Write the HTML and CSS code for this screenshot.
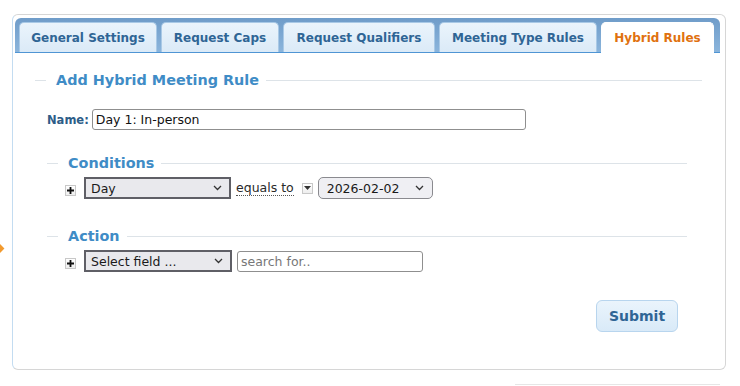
FILE: index.html
```html
<!DOCTYPE html>
<html>
<head>
<meta charset="utf-8">
<link rel="stylesheet" href="styles.css">
</head>
<body>
<div class="arrow"></div>
<div class="panel">
  <div class="tabbar">
    <div class="tab">General Settings</div>
    <div class="tab">Request Caps</div>
    <div class="tab">Request Qualifiers</div>
    <div class="tab">Meeting Type Rules</div>
    <div class="tab active">Hybrid Rules</div>
  </div>
  <div class="content">
    <div class="legend main"><span class="line short"></span><span class="ltext">Add Hybrid Meeting Rule</span><span class="line grow"></span></div>
    <div class="namerow">
      <span class="label">Name:</span>
      <input class="textin name" type="text" value="Day 1: In-person">
    </div>
    <div class="sub">
      <div class="legend"><span class="line short"></span><span class="ltext">Conditions</span><span class="line grow"></span></div>
      <div class="row">
        <span class="plus"><svg width="7" height="7" viewBox="0 0 7 7"><path d="M0 3.5H7M3.5 0V7" stroke="#111" stroke-width="1.8"/></svg></span>
        <span class="sel dark w146">Day<svg class="chev" width="9" height="6" viewBox="0 0 9 6"><path d="M1 1L4.5 4.5L8 1" fill="none" stroke="#333" stroke-width="1.3"/></svg></span>
        <span class="eq">equals to</span>
        <span class="dd"><svg width="7" height="4" viewBox="0 0 7 4"><path d="M0 0H7L3.5 4Z" fill="#333"/></svg></span>
        <span class="sel round w114">2026-02-02<svg class="chev" width="9" height="6" viewBox="0 0 9 6"><path d="M1 1L4.5 4.5L8 1" fill="none" stroke="#333" stroke-width="1.3"/></svg></span>
      </div>
    </div>
    <div class="sub action">
      <div class="legend"><span class="line short"></span><span class="ltext">Action</span><span class="line grow"></span></div>
      <div class="row">
        <span class="plus"><svg width="7" height="7" viewBox="0 0 7 7"><path d="M0 3.5H7M3.5 0V7" stroke="#111" stroke-width="1.8"/></svg></span>
        <span class="sel dark w147">Select field ...<svg class="chev" width="9" height="6" viewBox="0 0 9 6"><path d="M1 1L4.5 4.5L8 1" fill="none" stroke="#333" stroke-width="1.3"/></svg></span>
        <input class="textin search" type="text" placeholder="search for..">
      </div>
    </div>
    <div class="submitrow"><button class="submit">Submit</button></div>
  </div>
</div>
<div class="foot"></div>
</body>
</html>
```
FILE: styles.css
```css
* { box-sizing: border-box; }
html, body { margin: 0; padding: 0; background: #fff; }
body {
  font-family: "DejaVu Sans", Verdana, sans-serif;
  position: relative;
  width: 740px;
  height: 386px;
  overflow: hidden;
  padding: 14px 0 0 12px;
}
.arrow {
  position: absolute;
  left: -4px;
  top: 245px;
  width: 7px;
  height: 7px;
  background: #f29a2e;
  transform: rotate(45deg);
}
.panel {
  width: 714px;
  height: 356px;
  border: 1px solid #d6d6d6;
  border-left-color: #c3dcf1;
  border-radius: 6px;
  padding: 3px 5px 0 2px;
  display: flex;
  flex-direction: column;
}
.tabbar {
  height: 35px;
  background: linear-gradient(#6f9cc9, #8bb5dc);
  border-radius: 6px 6px 0 0;
  border-bottom: 1px solid #4f95d4;
  display: flex;
  align-items: flex-end;
  gap: 4px;
  padding: 0 5px 0 4px;
}
.tab {
  height: 30px;
  background: linear-gradient(#eaf4fc, #dbeaf7);
  border: 1px solid #a9c9e6;
  border-bottom: none;
  border-radius: 5px 5px 0 0;
  font-weight: bold;
  font-size: 12px;
  color: #2f6595;
  display: flex;
  align-items: center;
  justify-content: center;
  padding: 0;
}
.tab:nth-child(1) { width: 138px; }
.tab:nth-child(2) { width: 118px; }
.tab:nth-child(3) { width: 152px; }
.tab:nth-child(4) { width: 158px; }
.tab.active {
  width: 113px;
  background: #fff;
  border-color: #fff;
  color: #e0710f;
  height: 31px;
  margin-bottom: -1px;
  padding-bottom: 1px;
}
.content {
  flex: 1;
  padding: 17px 18px 0 20px;
  display: flex;
  flex-direction: column;
}
.legend {
  display: flex;
  align-items: center;
  height: 20px;
}
.line { height: 1px; background: #dde3e8; }
.line.short { width: 11px; margin-right: 10px; }
.line.grow { flex: 1; margin-left: 7px; }
.ltext {
  font-weight: bold;
  font-size: 14.4px;
  color: #3f8cc6;
  line-height: 20px;
}
.namerow {
  display: flex;
  align-items: center;
  margin-top: 19px;
  padding-left: 12px;
  gap: 3px;
}
.label {
  font-weight: bold;
  font-size: 11.5px;
  color: #2d5d88;
}
.textin {
  font-family: "DejaVu Sans", Verdana, sans-serif;
  font-size: 12.5px;
  color: #111;
  border: 1px solid #8f8f8f;
  border-radius: 3px;
  height: 21px;
  padding: 0 3px;
  outline: none;
  background: #fff;
}
.textin.name { width: 434px; }
.textin.search { width: 186px; height: 21px; margin-left: 5px; }
.textin::placeholder { color: #777; }
.sub {
  margin-top: 23px;
  padding-left: 12px;
  margin-right: 15px;
}
.sub.action { margin-top: 27px; }
.row {
  display: flex;
  align-items: center;
  padding-left: 18px;
  margin-top: 4px;
  height: 22px;
}
.plus {
  width: 11px;
  height: 11px;
  border: 1px solid #c8c8c8;
  background: linear-gradient(#fff, #eee);
  display: flex;
  align-items: center;
  justify-content: center;
  margin-right: 8px;
  margin-top: 4px;
}
.sel {
  height: 22px;
  display: flex;
  align-items: center;
  justify-content: space-between;
  font-size: 12.5px;
  color: #1a1a1a;
  padding: 0 7px 0 5px;
}
.sel.dark {
  background: #e9e9ed;
  border: 2px solid #5f5f66;
}
.sel.round {
  background: #efeff3;
  border: 1px solid #8a8a8f;
  border-radius: 5px;
  padding-left: 8px;
  padding-right: 8px;
}
.w146 { width: 147px; }
.w147 { width: 148px; }
.w114 { width: 115px; }
.eq {
  font-size: 12.5px;
  color: #2a2a2a;
  margin-left: 5px;
  border-bottom: 1px dotted #555;
  line-height: 15px;
}
.dd {
  width: 11px;
  height: 11px;
  border: 1px solid #c8c8c8;
  background: linear-gradient(#fff, #eee);
  display: flex;
  align-items: center;
  justify-content: center;
  margin-left: 8px;
  margin-right: 5px;
}
.submitrow {
  display: flex;
  justify-content: flex-end;
  margin-top: 28px;
  padding-right: 24px;
}
.submit {
  width: 82px;
  height: 32px;
  border: 1px solid #b8d5ee;
  border-radius: 6px;
  background: linear-gradient(#eaf4fc, #d9eaf8);
  font-family: "DejaVu Sans", Verdana, sans-serif;
  font-weight: bold;
  font-size: 14px;
  color: #2f6595;
}
.foot {
  margin: 14px 0 0 503px;
  width: 205px;
  border-top: 1px solid #e6e6e6;
}
```
